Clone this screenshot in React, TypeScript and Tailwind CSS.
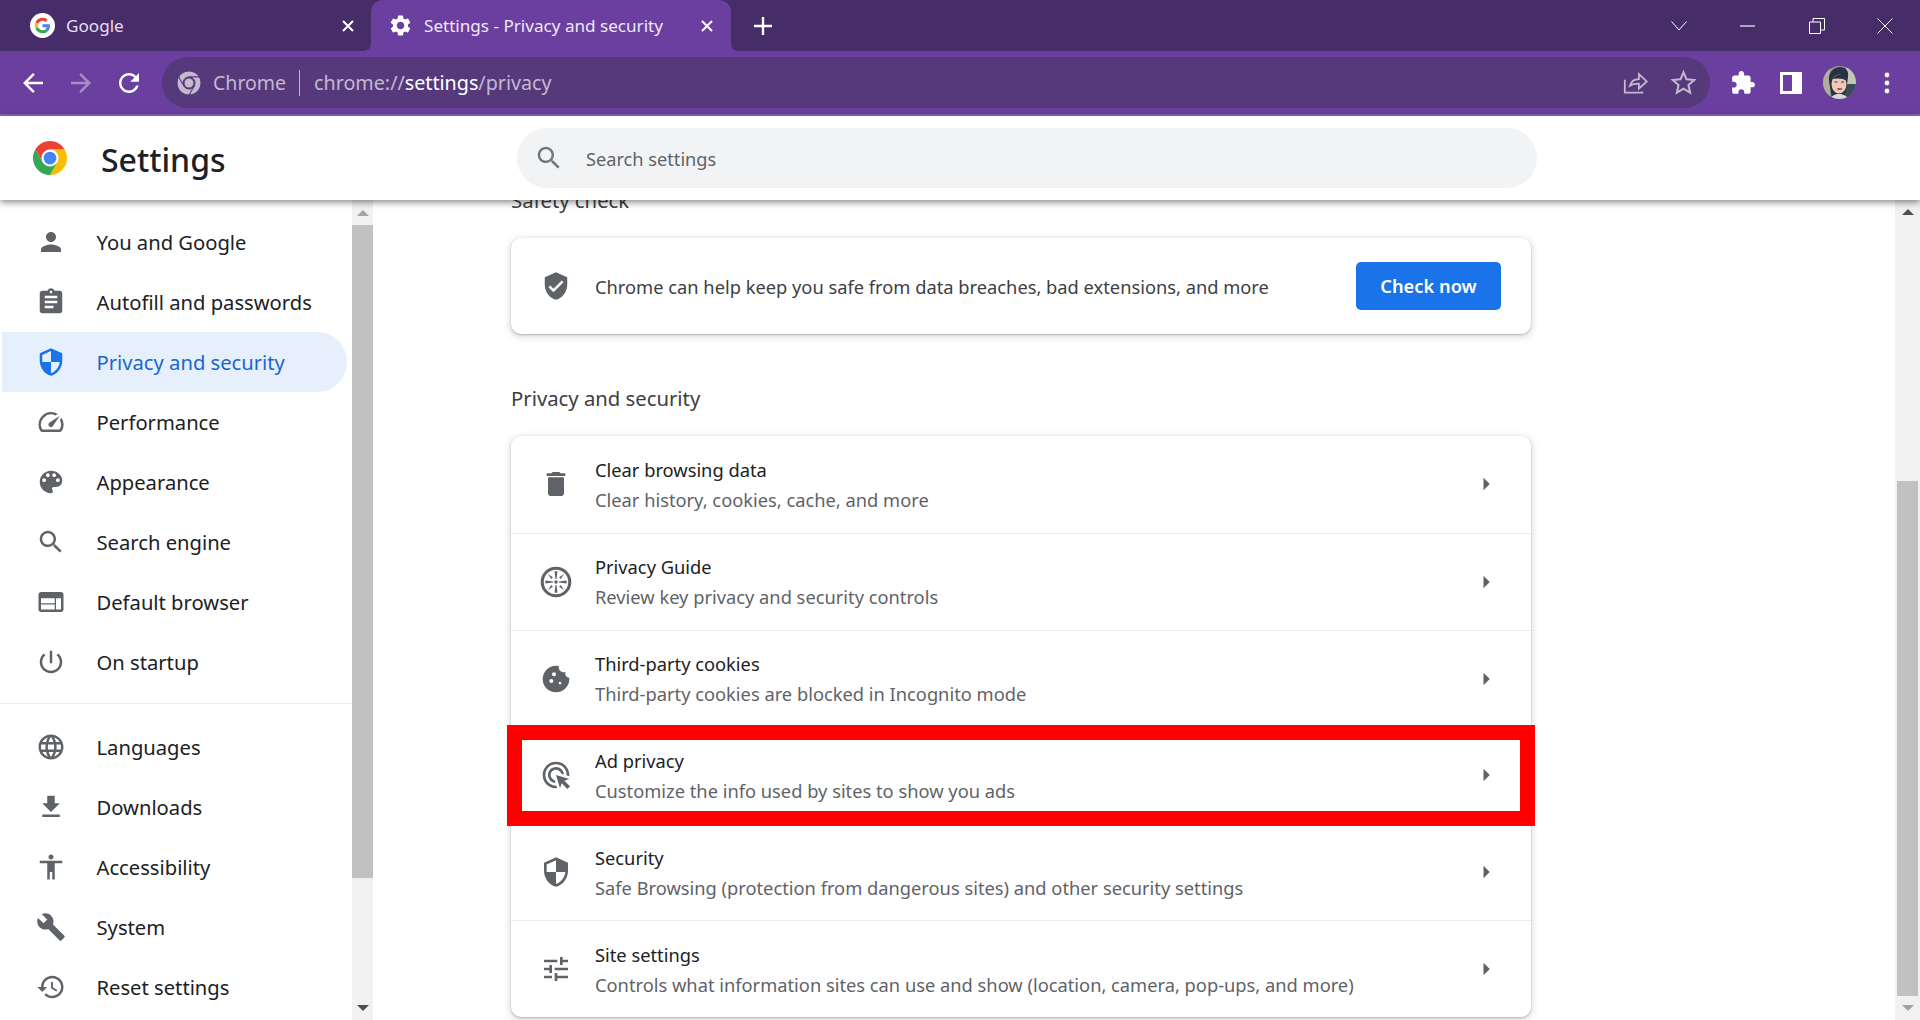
import React from "react";

const F = "font-['Noto_Sans',sans-serif]";
const P: Record<string, string> = {
  person: "M12 12c2.21 0 4-1.79 4-4s-1.79-4-4-4-4 1.79-4 4 1.79 4 4 4zm0 2c-2.67 0-8 1.34-8 4v2h16v-2c0-2.66-5.33-4-8-4z",
  assign: "M19 3h-4.18C14.4 1.84 13.3 1 12 1c-1.3 0-2.4.84-2.82 2H5c-1.1 0-2 .9-2 2v14c0 1.1.9 2 2 2h14c1.1 0 2-.9 2-2V5c0-1.1-.9-2-2-2zm-7 0c.55 0 1 .45 1 1s-.45 1-1 1-1-.45-1-1 .45-1 1-1zm2 14H7v-2h7v2zm3-4H7v-2h10v2zm0-4H7V7h10v2z",
  shield: "M12 1L3 5v6c0 5.55 3.84 10.74 9 12 5.16-1.26 9-6.45 9-12V5l-9-4zm0 2.19l7 3.11V12h-7V3.19zM12 12v8.93c-3.72-1.15-6.47-4.82-7-8.93h7z",
  speed: "M20.38 8.57l-1.23 1.85a8 8 0 0 1-.22 7.58H5.07A8 8 0 0 1 15.58 6.85l1.85-1.23A10 10 0 0 0 3.35 19a2 2 0 0 0 1.72 1h13.85a2 2 0 0 0 1.74-1 10 10 0 0 0-.27-10.44zm-9.79 6.84a2 2 0 0 0 2.83 0l5.66-8.49-8.49 5.66a2 2 0 0 0 0 2.83z",
  palette: "M12 3c-4.97 0-9 4.03-9 9s4.03 9 9 9c.83 0 1.5-.67 1.5-1.5 0-.39-.15-.74-.39-1.01-.23-.26-.38-.61-.38-.99 0-.83.67-1.5 1.5-1.5H16c2.76 0 5-2.24 5-5 0-4.42-4.03-8-9-8zm-5.5 9c-.83 0-1.5-.67-1.5-1.5S5.67 9 6.5 9 8 9.67 8 10.5 7.33 12 6.5 12zm3-4C8.67 8 8 7.33 8 6.5S8.67 5 9.5 5s1.5.67 1.5 1.5S10.33 8 9.5 8zm5 0c-.83 0-1.5-.67-1.5-1.5S13.67 5 14.5 5s1.5.67 1.5 1.5S15.33 8 14.5 8zm3 4c-.83 0-1.5-.67-1.5-1.5S16.67 9 17.5 9s1.5.67 1.5 1.5-.67 1.5-1.5 1.5z",
  search: "M15.5 14h-.79l-.28-.27C15.41 12.59 16 11.11 16 9.5 16 5.91 13.09 3 9.5 3S3 5.91 3 9.5 5.91 16 9.5 16c1.61 0 3.09-.59 4.23-1.57l.27.28v.79l5 4.99L20.49 19l-4.99-5zm-6 0C7.01 14 5 11.99 5 9.5S7.01 5 9.5 5 14 7.01 14 9.5 11.99 14 9.5 14z",
  web: "M20 4H4c-1.1 0-2 .9-2 2v12c0 1.1.9 2 2 2h16c1.1 0 2-.9 2-2V6c0-1.1-.9-2-2-2zm-5 14H4v-4h11v4zm0-5H4V9h11v4zm5 5h-4V9h4v9z",
  power: "M13 3h-2v10h2V3zm4.83 2.17l-1.42 1.42C17.99 7.86 19 9.81 19 12c0 3.87-3.13 7-7 7s-7-3.13-7-7c0-2.19 1.01-4.14 2.58-5.42L6.17 5.17C4.23 6.82 3 9.26 3 12c0 4.97 4.03 9 9 9s9-4.03 9-9c0-2.74-1.23-5.18-3.17-6.83z",
  globe: "M11.99 2C6.47 2 2 6.48 2 12s4.47 10 9.99 10C17.52 22 22 17.52 22 12S17.52 2 11.99 2zm6.93 6h-2.95c-.32-1.25-.78-2.45-1.38-3.56 1.84.63 3.37 1.91 4.33 3.56zM12 4.04c.83 1.2 1.48 2.53 1.91 3.96h-3.82c.43-1.43 1.08-2.76 1.91-3.96zM4.26 14C4.1 13.36 4 12.69 4 12s.1-1.36.26-2h3.38c-.08.66-.14 1.32-.14 2 0 .68.06 1.34.14 2H4.26zm.82 2h2.95c.32 1.25.78 2.45 1.38 3.56-1.84-.63-3.37-1.9-4.33-3.56zm2.95-8H5.08c.96-1.66 2.49-2.93 4.33-3.56C8.81 5.55 8.35 6.75 8.03 8zM12 19.96c-.83-1.2-1.48-2.53-1.91-3.96h3.82c-.43 1.43-1.08 2.76-1.91 3.96zM14.34 14H9.66c-.09-.66-.16-1.32-.16-2 0-.68.07-1.35.16-2h4.68c.09.65.16 1.32.16 2 0 .68-.07 1.34-.16 2zm.25 5.56c.6-1.11 1.06-2.31 1.38-3.56h2.95c-.96 1.65-2.49 2.93-4.33 3.56zM16.36 14c.08-.66.14-1.32.14-2 0-.68-.06-1.34-.14-2h3.38c.16.64.26 1.31.26 2s-.1 1.36-.26 2h-3.38z",
  download: "M19 9h-4V3H9v6H5l7 7 7-7zM5 18v2h14v-2H5z",
  access: "M12 2c1.1 0 2 .9 2 2s-.9 2-2 2-2-.9-2-2 .9-2 2-2zm9 7h-6v13h-2v-6h-2v6H9V9H3V7h18v2z",
  build: "M22.7 19l-9.1-9.1c.9-2.3.4-5-1.5-6.9-2-2-5-2.4-7.4-1.3L9 6 6 9 1.6 4.7C.4 7.1.9 10.1 2.9 12.1c1.9 1.9 4.6 2.4 6.9 1.5l9.1 9.1c.4.4 1 .4 1.4 0l2.3-2.3c.5-.4.5-1.1.1-1.4z",
  restore: "M13 3c-4.97 0-9 4.03-9 9H1l3.89 3.89.07.14L9 12H6c0-3.87 3.13-7 7-7s7 3.13 7 7-3.13 7-7 7c-1.93 0-3.68-.79-4.94-2.06l-1.42 1.42C8.27 19.99 10.51 21 13 21c4.97 0 9-4.03 9-9s-4.03-9-9-9zm-1 5v5l4.28 2.54.72-1.21-3.5-2.08V8H12z",
  verified: "M12 1L3 5v6c0 5.55 3.84 10.74 9 12 5.16-1.26 9-6.45 9-12V5l-9-4zm-2 16l-4-4 1.41-1.41L10 14.17l6.59-6.59L18 9l-8 8z",
  del: "M6 19c0 1.1.9 2 2 2h8c1.1 0 2-.9 2-2V7H6v12zM19 4h-3.5l-1-1h-5l-1 1H5v2h14V4z",
  cookie: "M21.95 10.99c-1.79-.03-3.7-1.95-2.68-4.22-2.97 1-5.78-1.59-5.19-4.56C7.11.74 2 6.41 2 12c0 5.52 4.48 10 10 10 5.89 0 10.54-5.08 9.95-11.01zM8.5 15c-.83 0-1.5-.67-1.5-1.5S7.67 12 8.5 12s1.5.67 1.5 1.5S9.33 15 8.5 15zm2-5C9.67 10 9 9.33 9 8.5S9.67 7 10.5 7s1.5.67 1.5 1.5-.67 1.5-1.5 1.5zm4.5 6c-.55 0-1-.45-1-1s.45-1 1-1 1 .45 1 1-.45 1-1 1z",
  ads: "M11.71 17.99C8.53 17.84 6 15.22 6 12c0-3.31 2.69-6 6-6 3.22 0 5.84 2.53 5.99 5.71l-2.1-.63C15.48 9.31 13.89 8 12 8c-2.21 0-4 1.79-4 4 0 1.89 1.31 3.48 3.08 3.89l.63 2.1zM22 12c0 .3-.01.6-.04.9l-1.97-.59c.01-.1.01-.21.01-.31 0-4.42-3.58-8-8-8s-8 3.58-8 8 3.58 8 8 8c.1 0 .21 0 .31-.01l.59 1.97c-.3.03-.6.04-.9.04-5.52 0-10-4.48-10-10S6.48 2 12 2s10 4.48 10 10zm-3.77 4.26L22 15l-10-3 3 10 1.26-3.77 4.27 4.27 1.97-1.97-4.27-4.27z",
  tune: "M3 17v2h6v-2H3zM3 5v2h10V5H3zm10 16v-2h8v-2h-8v-2h-2v6h2zM7 9v2H3v2h4v2h2V9H7zm14 4v-2H11v2h10zm-6-4h2V7h4V5h-4V3h-2v6z",
  compass: "M12 .5a11.5 11.5 0 1 0 0 23 11.5 11.5 0 0 0 0-23zm0 2.3a9.2 9.2 0 1 1 0 18.4 9.2 9.2 0 0 1 0-18.4zM10.9 4h2.2l-.7 5.8h-.8zM20 10.9v2.2l-5.8-.7v-.8zM10.9 20h2.2l-.7-5.8h-.8zM4 10.9v2.2l5.8-.7v-.8zM14.3 8.4l3.7-2.4-2.4 3.7zM9.7 8.4L6 6l2.4 3.7zM14.3 15.6l3.7 2.4-2.4-3.7zM9.7 15.6L6 18l2.4-3.7zM12 10.7a1.3 1.3 0 1 0 0 2.6 1.3 1.3 0 0 0 0-2.6z",
  gear: "M19.14 12.94c.04-.3.06-.61.06-.94 0-.32-.02-.64-.07-.94l2.03-1.58c.18-.14.23-.41.12-.61l-1.92-3.32c-.12-.22-.37-.29-.59-.22l-2.39.96c-.5-.38-1.03-.7-1.62-.94l-.36-2.54c-.04-.24-.24-.41-.48-.41h-3.84c-.24 0-.43.17-.47.41l-.36 2.54c-.59.24-1.13.57-1.62.94l-2.39-.96c-.22-.08-.47 0-.59.22L2.74 8.87c-.12.21-.08.47.12.61l2.03 1.58c-.05.3-.09.63-.09.94s.02.64.07.94l-2.03 1.58c-.18.14-.23.41-.12.61l1.92 3.32c.12.22.37.29.59.22l2.39-.96c.5.38 1.03.7 1.62.94l.36 2.54c.05.24.24.41.48.41h3.84c.24 0 .44-.17.47-.41l.36-2.54c.59-.24 1.13-.56 1.62-.94l2.39.96c.22.08.47 0 .59-.22l1.92-3.32c.12-.22.07-.47-.12-.61l-2.01-1.58zM12 15.6c-1.98 0-3.6-1.62-3.6-3.6s1.62-3.6 3.6-3.6 3.6 1.62 3.6 3.6-1.62 3.6-3.6 3.6z",
  puzzle: "M20.5 11H19V7c0-1.1-.9-2-2-2h-4V3.5C13 2.12 11.88 1 10.5 1S8 2.12 8 3.5V5H4c-1.1 0-1.99.9-1.99 2v3.8H3.5c1.49 0 2.7 1.21 2.7 2.7s-1.21 2.7-2.7 2.7H2V20c0 1.1.9 2 2 2h3.8v-1.5c0-1.49 1.21-2.7 2.7-2.7 1.49 0 2.7 1.21 2.7 2.7V22H17c1.1 0 2-.9 2-2v-4h1.5c1.38 0 2.5-1.12 2.5-2.5S21.88 11 20.5 11z",
  back: "M20 11H7.83l5.59-5.59L12 4l-8 8 8 8 1.41-1.41L7.83 13H20v-2z",
  forward: "M12 4l-1.41 1.41L16.17 11H4v2h12.17l-5.58 5.59L12 20l8-8z",
  reload: "M17.65 6.35C16.2 4.9 14.21 4 12 4c-4.42 0-7.99 3.58-7.99 8s3.57 8 7.99 8c3.73 0 6.84-2.55 7.73-6h-2.08c-.82 2.33-3.04 4-5.65 4-3.31 0-6-2.69-6-6s2.69-6 6-6c1.66 0 3.14.69 4.22 1.78L13 11h7V4l-2.35 2.35z",
  arrow: "M10 17l5-5-5-5v10z",
};

function I({ n, s = 30, c = "text-[#5f6368]" }: { n: string; s?: number; c?: string }) {
  return (
    <svg viewBox="0 0 24 24" width={s} height={s} className={`block shrink-0 fill-current ${c}`}>
      <path d={P[n]} />
    </svg>
  );
}

function ChromeLogo({ s, r, y, g, b, w, line }: { s: number; r: string; y: string; g: string; b: string; w: string; line?: string }) {
  return (
    <svg viewBox="0 0 48 48" width={s} height={s} className="block shrink-0">
      <path fill={r} stroke={line} strokeWidth={line ? 2 : 0} d="M3.22 12A24 24 0 0 1 44.78 12L24 12A12 12 0 0 0 13.61 30Z" />
      <path fill={y} stroke={line} strokeWidth={line ? 2 : 0} d="M44.78 12A24 24 0 0 1 24 48L34.39 30A12 12 0 0 0 24 12Z" />
      <path fill={g} stroke={line} strokeWidth={line ? 2 : 0} d="M24 48A24 24 0 0 1 3.22 12L13.61 30A12 12 0 0 0 34.39 30Z" />
      <circle cx="24" cy="24" r="11.5" fill={w} />
      <circle cx="24" cy="24" r="9" fill={b} />
    </svg>
  );
}

function GoogleG() {
  return (
    <svg viewBox="0 0 32 32" width={25} height={25} className="block shrink-0">
      <circle cx="16" cy="16" r="16" fill="#fff" />
      <g transform="translate(6 6) scale(0.4167)">
        <path fill="#EA4335" d="M24 9.5c3.54 0 6.71 1.22 9.21 3.6l6.85-6.85C35.9 2.38 30.47 0 24 0 14.62 0 6.51 5.38 2.56 13.22l7.98 6.19C12.43 13.72 17.74 9.5 24 9.5z" />
        <path fill="#4285F4" d="M46.98 24.55c0-1.57-.15-3.09-.38-4.55H24v9.02h12.94c-.58 2.96-2.26 5.48-4.78 7.18l7.73 6c4.51-4.18 7.09-10.36 7.09-17.65z" />
        <path fill="#FBBC05" d="M10.53 28.59c-.48-1.45-.76-2.99-.76-4.59s.27-3.14.76-4.59l-7.98-6.19C.92 16.46 0 20.12 0 24c0 3.88.92 7.54 2.56 10.78l7.97-6.19z" />
        <path fill="#34A853" d="M24 48c6.48 0 11.93-2.13 15.89-5.81l-7.73-6c-2.15 1.45-4.92 2.3-8.16 2.3-6.26 0-11.57-4.22-13.47-9.91l-7.98 6.19C6.51 42.62 14.62 48 24 48z" />
      </g>
    </svg>
  );
}

function Avatar() {
  return (
    <svg viewBox="0 0 33 33" width={33} height={33} className="block shrink-0 rounded-full blur-[0.4px]">
      <rect width="33" height="33" fill="#8f9a90" />
      <rect x="23" y="2" width="10" height="16" fill="#c3c9b8" />
      <rect x="23" y="18" width="10" height="15" fill="#3f4a58" />
      <rect x="0" y="0" width="7" height="33" fill="#b5ad9c" />
      <path fill="#2a3144" d="M6 15C5 6 11 1 17 1c6 0 9 4 8 10l-3 22H9z" />
      <ellipse cx="16" cy="18" rx="7.5" ry="9.5" fill="#eec9b9" />
      <path fill="#2a3144" d="M9 13c3-4 9-6 12-3l3 5c-4-3-10-3-15-2z" />
      <rect x="11.5" y="15.5" width="3" height="1" fill="#4a3636" />
      <rect x="18" y="15.5" width="3" height="1" fill="#4a3636" />
      <ellipse cx="16.5" cy="23" rx="2.8" ry="1" fill="#c6464b" />
      <path fill="#d9d6dc" d="M7 33c1-3 5-5 9-5s8 2 9 5z" />
    </svg>
  );
}

function Tab({ active, icon, title }: { active?: boolean; icon: React.ReactNode; title: string }) {
  return (
    <div className={`relative flex h-[51px] w-[360px] items-center rounded-t-[12px] ${active ? "bg-[#6b3fa0] pl-[17px] pr-[17px] text-[#efe8f6]" : "pl-[19px] pr-[16px] text-[#e6dff0]"}`}>
      {active && (
        <svg viewBox="0 0 8 8" width={8} height={8} className="absolute -left-[8px] bottom-0 block"><path d="M8 0v8H0C5 8 8 5 8 0z" fill="#6b3fa0" /></svg>
      )}
      {active && (
        <svg viewBox="0 0 8 8" width={8} height={8} className="absolute -right-[8px] bottom-0 block"><path d="M0 0v8h8C3 8 0 5 0 0z" fill="#6b3fa0" /></svg>
      )}
      {icon}
      <span className={`ml-[11px] flex-1 text-[17.1px] leading-none ${F}`}>{title}</span>
      <svg viewBox="0 0 14 14" width={14} height={14} className="block shrink-0"><path d="M2 2l10 10M12 2L2 12" stroke="#fff" strokeWidth="2" /></svg>
    </div>
  );
}

const nav1: [string, string][] = [["person", "You and Google"], ["assign", "Autofill and passwords"], ["shield", "Privacy and security"], ["speed", "Performance"], ["palette", "Appearance"], ["search", "Search engine"], ["web", "Default browser"], ["power", "On startup"]];
const nav2: [string, string][] = [["globe", "Languages"], ["download", "Downloads"], ["access", "Accessibility"], ["build", "System"], ["restore", "Reset settings"]];

function NavItem({ i, t }: { i: string; t: string }) {
  const on = t === "Privacy and security";
  return (
    <div className={`flex h-[60px] items-center ${on ? "ml-[2px] w-[345px] rounded-r-[30px] bg-[#e6effc] pl-[34px] text-[#1967d2]" : "pl-[36px] text-[#202124]"}`}>
      <span className={on ? "scale-x-[-1]" : ""}>
        <I n={i} c={on ? "text-[#1a73e8]" : "text-[#5f6368]"} />
      </span>
      <span className={`ml-[30.5px] text-[20.2px] leading-none ${F}`}>{t}</span>
    </div>
  );
}

const rows: [string, string, string][] = [
  ["del", "Clear browsing data", "Clear history, cookies, cache, and more"],
  ["compass", "Privacy Guide", "Review key privacy and security controls"],
  ["cookie", "Third-party cookies", "Third-party cookies are blocked in Incognito mode"],
  ["ads", "Ad privacy", "Customize the info used by sites to show you ads"],
  ["shield", "Security", "Safe Browsing (protection from dangerous sites) and other security settings"],
  ["tune", "Site settings", "Controls what information sites can use and show (location, camera, pop-ups, and more)"],
];

function Row({ i, t, d, idx }: { i: string; t: string; d: string; idx: number }) {
  return (
    <div className={`relative flex h-[96.83px] items-center pl-[29px] pr-[30px] ${idx ? "border-t border-[#e8eaed]" : ""}`}>
      <span className={i === "shield" ? "scale-x-[-1]" : ""}><I n={i} s={32} /></span>
      <div className={`ml-[23px] flex-1 ${idx === 1 || idx === 2 ? "pt-0" : "pt-[2px]"}`}>
        <div className={`text-[18.3px] leading-[30px] text-[#202124] ${F}`}>{t}</div>
        <div className={`text-[18.3px] leading-[30px] text-[#5f6368] ${F}`}>{d}</div>
      </div>
      <I n="arrow" s={30} />
      {idx === 3 && <div className="absolute -bottom-[3px] -left-[4px] -right-[4px] -top-[2px] z-10 border-[15px] border-[#ff0000]" />}
    </div>
  );
}

function Scrollbar({ w, thumbTop, thumbH, upDark, downDark }: { w: string; thumbTop: string; thumbH: string; upDark: boolean; downDark: boolean }) {
  return (
    <div className={`flex shrink-0 flex-col items-center bg-[#f1f1f1] ${w}`}>
      <div className="flex h-[25px] items-center justify-center">
        <div className={`h-0 w-0 border-x-[6px] border-b-[6px] border-x-transparent ${upDark ? "border-b-[#505050]" : "border-b-[#a3a3a3]"}`} />
      </div>
      <div className={`w-[21px] shrink-0 bg-[#c1c1c1] ${thumbTop} ${thumbH}`} />
      <div className="flex-1" />
      <div className="flex h-[25px] items-center justify-center">
        <div className={`h-0 w-0 border-x-[6px] border-t-[6px] border-x-transparent ${downDark ? "border-t-[#505050]" : "border-t-[#a3a3a3]"}`} />
      </div>
    </div>
  );
}

export default function App() {
  return (
    <div className={`flex h-[1020px] w-[1920px] flex-col overflow-hidden bg-white ${F}`}>
      {/* tab strip */}
      <div className="flex h-[51px] shrink-0 items-center bg-[#472c6a] pl-[11px]">
        <Tab icon={<GoogleG />} title="Google" />
        <Tab active icon={<I n="gear" s={25} c="text-white" />} title="Settings - Privacy and security" />
        <svg viewBox="0 0 20 20" width={20} height={20} className="ml-[22px] block shrink-0"><path d="M10 1v18M1 10h18" stroke="#fff" strokeWidth="2.4" /></svg>
        <div className="flex-1" />
        <svg viewBox="0 0 16 10" width={16} height={10} className="mr-[53px] block"><path d="M.5.5L8 9 15.5.5" stroke="#fff" fill="none" strokeWidth="1" /></svg>
        <svg viewBox="0 0 16 2" width={15} height={2} className="mr-[54px] block"><path d="M0 1h16" stroke="#fff" strokeWidth="1.2" /></svg>
        <svg viewBox="0 0 16 16" width={16} height={16} className="mr-[52px] block"><path d="M.5 4h11v11.5H.5zM4 4V.5h11.5V12H11.5" stroke="#fff" fill="none" strokeWidth="1" /></svg>
        <svg viewBox="0 0 16 16" width={16} height={16} className="mr-[27px] block"><path d="M.5.5l15 15M15.5.5l-15 15" stroke="#fff" fill="none" strokeWidth="1" /></svg>
      </div>
      {/* toolbar */}
      <div className="flex h-[65px] shrink-0 items-center border-b-2 border-[#8a68ad] bg-[#6b3fa0]">
        <div className="ml-[18px]"><I n="back" s={30} c="text-white" /></div>
        <div className="ml-[18px]"><I n="forward" s={30} c="text-[#a88cc8]" /></div>
        <div className="ml-[18px]"><I n="reload" s={30} c="text-white" /></div>
        <div className="ml-[18px] flex h-[51px] w-[1548px] items-center rounded-full bg-[#56397b]">
          <div className="ml-[15px]">
            <ChromeLogo s={24} r="#c4b9cf" y="#c4b9cf" g="#c4b9cf" b="#c4b9cf" w="#56397b" line="#56397b" />
          </div>
          <span className={`ml-[12px] text-[19.5px] leading-none text-[#c4b8d2] ${F}`}>Chrome</span>
          <div className="ml-[13px] h-[26px] w-px bg-[#c4b8d2]" />
          <span className={`ml-[14px] text-[19.7px] leading-none text-[#c4b8d2] ${F}`}>chrome://<span className="text-white">settings</span>/privacy</span>
          <div className="flex-1" />
          <svg viewBox="0 0 24 24" width={27} height={27} className="block shrink-0"><path d="M2.5 9.5v11.5h16.5M7 15c1-4 4-6 8-6V4.5l7 6.5-7 6.5V13c-3 0-6 .5-8 2z" stroke="#c4b8d2" fill="none" strokeWidth="1.6" /></svg>
          <svg viewBox="0 0 24 24" width={27} height={27} className="ml-[21px] mr-[13px] block shrink-0"><path d="M12 3l2.7 6.2 6.8.6-5.1 4.5 1.5 6.7-5.9-3.5-5.9 3.5 1.5-6.7-5.1-4.5 6.8-.6z" stroke="#c4b8d2" fill="none" strokeWidth="1.8" /></svg>
        </div>
        <div className="ml-[20px]"><I n="puzzle" s={26} c="text-white" /></div>
        <svg viewBox="0 0 24 24" width={24} height={24} className="ml-[23px] block shrink-0"><path fillRule="evenodd" fill="#fff" d="M1 1h22v22H1zM4 4v16h9V4z" /></svg>
        <div className="ml-[20px]"><Avatar /></div>
        <svg viewBox="0 0 6 22" width={6} height={22} className="ml-[28px] block shrink-0"><circle cx="3" cy="3" r="2.4" fill="#fff" /><circle cx="3" cy="11" r="2.4" fill="#fff" /><circle cx="3" cy="19" r="2.4" fill="#fff" /></svg>
      </div>
      {/* page header */}
      <div className="relative z-20 flex h-[84px] shrink-0 items-center bg-white shadow-[0_2px_7px_rgba(0,0,0,0.5)]">
        <div className="ml-[33px] -mt-[1px]">
          <ChromeLogo s={34} r="#ea4335" y="#fbbc04" g="#34a853" b="#4285f4" w="#fff" />
        </div>
        <span className={`ml-[34px] mt-[4px] w-[416px] text-[32px] font-medium leading-none text-[#202124] ${F}`}>Settings</span>
        <div className="flex h-[60px] w-[1020px] items-center rounded-full bg-[#f1f3f4] pl-[17px]">
          <I n="search" s={30} c="text-[#73777b]" />
          <span className={`ml-[22px] mt-[2px] text-[18.2px] leading-none text-[#5f6368] ${F}`}>Search settings</span>
        </div>
      </div>
      {/* body */}
      <div className="flex min-h-0 flex-1">
        <div className="flex w-[352px] shrink-0 flex-col pt-[12px]">
          {nav1.map(([i, t]) => <NavItem key={t} i={i} t={t} />)}
          <div className="mb-[13px] mt-[11px] border-t border-[#e8eaed]" />
          {nav2.map(([i, t]) => <NavItem key={t} i={i} t={t} />)}
        </div>
        <Scrollbar w="w-[21px]" thumbTop="" thumbH="h-[653px]" upDark={false} downDark />
        <div className="min-w-0 flex-1 pl-[138px]">
          <div className={`-mt-[15px] h-[53px] text-[20.3px] leading-[30px] text-[#3c4043] ${F}`}>Safety check</div>
          <div className="flex h-[96px] w-[1020px] items-center rounded-[10px] bg-white pl-[30px] pr-[30px] shadow-[0_1px_2px_rgba(60,64,67,0.3),0_2px_6px_2px_rgba(60,64,67,0.15)]">
            <I n="verified" s={30} />
            <span className={`ml-[24px] mt-[2px] flex-1 text-[18.3px] text-[#3c4043] ${F}`}>Chrome can help keep you safe from data breaches, bad extensions, and more</span>
            <div className={`flex h-[48px] w-[145px] items-center justify-center rounded-[5px] bg-[#1a73e8] text-[18.3px] font-semibold text-white ${F}`}>Check now</div>
          </div>
          <div className={`mt-[49px] text-[20.3px] leading-[30px] text-[#3c4043] ${F}`}>Privacy and security</div>
          <div className="mt-[23px] w-[1020px] rounded-[10px] bg-white shadow-[0_1px_2px_rgba(60,64,67,0.3),0_2px_6px_2px_rgba(60,64,67,0.15)]">
            {rows.map(([i, t, d], idx) => <Row key={t} i={i} t={t} d={d} idx={idx} />)}
          </div>
        </div>
        <Scrollbar w="w-[25px]" thumbTop="mt-[256px]" thumbH="h-[515px]" upDark downDark={false} />
      </div>
    </div>
  );
}
